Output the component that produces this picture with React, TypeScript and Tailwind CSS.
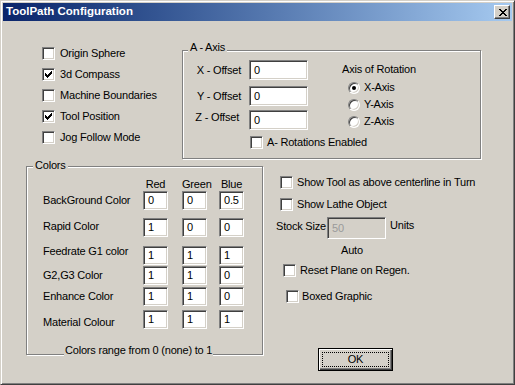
import React from 'react'

const sunken =
  'border border-t-[#808080] border-l-[#808080] border-b-white border-r-white shadow-[inset_1px_1px_0_#404040,inset_-1px_-1px_0_#d4d0c8]'

function Check({ checked = false }: { checked?: boolean }) {
  return (
    <span className={`flex h-[13px] w-[13px] shrink-0 items-center justify-center bg-white ${sunken}`}>
      {checked && (
        <svg width="7" height="7" viewBox="0 0 7 7" shapeRendering="crispEdges">
          <path
            d="M0 2h1v3H0zM1 3h1v3H1zM2 4h1v3H2zM3 3h1v3H3zM4 2h1v3H4zM5 1h1v3H5zM6 0h1v3H6z"
            fill="#000"
          />
        </svg>
      )}
    </span>
  )
}

function Radio({ checked = false }: { checked?: boolean }) {
  return (
    <span className={`flex h-[12px] w-[12px] shrink-0 items-center justify-center rounded-full bg-white ${sunken}`}>
      {checked && <span className="h-[4px] w-[4px] rounded-full bg-black" />}
    </span>
  )
}

function Field({ value, className = '' }: { value: string; className?: string }) {
  return <div className={`flex shrink-0 items-center bg-white pl-[4px] ${sunken} ${className}`}>{value}</div>
}

function CheckRow({ label, checked, className = '', gap = 'gap-[4px]' }: { label: string; checked?: boolean; className?: string; gap?: string }) {
  return (
    <div className={`flex h-[13px] items-center whitespace-nowrap ${gap} ${className}`}>
      <Check checked={checked} />
      <span>{label}</span>
    </div>
  )
}

const colorRows = [
  { name: 'BackGround Color', rgb: ['0', '0', '0.5'], row: 'mt-0', label: '' },
  { name: 'Rapid Color', rgb: ['1', '0', '0'], row: 'mt-[8px]', label: 'top-[-1px]' },
  { name: 'Feedrate G1 color', rgb: ['1', '1', '1'], row: 'mt-[9px]', label: 'top-[-4px]' },
  { name: 'G2,G3 Color', rgb: ['1', '1', '0'], row: 'mt-[1px]', label: '' },
  { name: 'Enhance Color', rgb: ['1', '1', '0'], row: 'mt-[2px]', label: '' },
  { name: 'Material Colour', rgb: ['1', '1', '1'], row: 'mt-[4px]', label: 'top-[3px]' },
]

const etched = 'border border-[#808080] shadow-[inset_1px_1px_0_#fff,1px_1px_0_#fff]'

export default function App() {
  return (
    <div className="h-[385px] w-[515px] bg-[#d4d0c8] font-['Liberation_Sans',Arial,sans-serif] text-[11px] tracking-[-0.2px] text-black">
      <div className="flex h-full flex-col border border-t-[#d4d0c8] border-l-[#d4d0c8] border-r-[#404040] border-b-[#404040] p-[2px] shadow-[inset_1px_1px_0_#fff,inset_-1px_-1px_0_#808080]">
        {/* Title bar */}
        <div className="flex h-[18px] shrink-0 items-center justify-between bg-linear-to-r from-[#0a246a] to-[#a6caf0] pl-[3px] pr-[2px]">
          <span className="text-[11.5px] font-bold tracking-normal text-white">ToolPath Configuration</span>
          <div className="flex h-[14px] w-[16px] items-center justify-center border border-t-white border-l-white border-r-[#404040] border-b-[#404040] bg-[#d4d0c8] pl-[1px] shadow-[inset_-1px_-1px_0_#808080]">
            <svg width="8" height="7" viewBox="0 0 8 7" shapeRendering="crispEdges">
              <path
                d="M0 0h2v1H0zM6 0h2v1H6zM1 1h2v1H1zM5 1h2v1H5zM2 2h4v1H2zM3 3h2v1H3zM2 4h4v1H2zM1 5h2v1H1zM5 5h2v1H5zM0 6h2v1H0zM6 6h2v1H6z"
                fill="#000"
              />
            </svg>
          </div>
        </div>

        {/* Body */}
        <div className="flex flex-1 flex-col">
          {/* Top row */}
          <div className="flex items-start">
            <div className="ml-[39px] flex w-[140px] flex-col pt-[22px]">
              {[
                ['Origin Sphere', false],
                ['3d Compass', true],
                ['Machine Boundaries', false],
                ['Tool Position', true],
                ['Jog Follow Mode', false],
              ].map(([label, checked]) => (
                <div key={label as string} className="flex h-[21px] items-center gap-[5px] whitespace-nowrap">
                  <Check checked={checked as boolean} />
                  <span>{label}</span>
                </div>
              ))}
            </div>

            {/* A - Axis */}
            <div className={`relative mt-[29px] h-[109px] w-[299px] ${etched}`}>
              <span className="absolute left-[5px] top-[-10px] bg-[#d4d0c8] px-[2px] leading-[13px]">A - Axis</span>
              <div className="flex flex-col pl-[7px] pt-[9px]">
                <div className="flex items-start">
                  <div className="flex flex-col">
                    <div className="flex items-center">
                      <span className="w-[51px] text-right">X - Offset</span>
                      <Field value="0" className="ml-[8px] h-[20px] w-[59px]" />
                    </div>
                    <div className="mt-[6px] flex items-center">
                      <span className="w-[51px] text-right">Y - Offset</span>
                      <Field value="0" className="ml-[8px] h-[20px] w-[59px]" />
                    </div>
                    <div className="mt-[4px] flex items-center">
                      <span className="relative top-[-3px] w-[49px] text-right">Z - Offset</span>
                      <Field value="0" className="ml-[10px] h-[20px] w-[59px]" />
                    </div>
                  </div>
                  <div className="ml-[34px] flex flex-col">
                    <span className="mt-[3px] leading-[13px]">Axis of Rotation</span>
                    <div className="mt-[3px] flex flex-col">
                      {[
                        ['X-Axis', true],
                        ['Y-Axis', false],
                        ['Z-Axis', false],
                      ].map(([label, checked]) => (
                        <div key={label as string} className="ml-[6px] flex h-[17px] items-center gap-[4px]">
                          <Radio checked={checked as boolean} />
                          <span>{label}</span>
                        </div>
                      ))}
                    </div>
                  </div>
                </div>
                <CheckRow label="A- Rotations Enabled" className="ml-[60px] mt-[6px]" />
              </div>
            </div>
          </div>

          {/* Bottom row */}
          <div className="flex items-start">
            {/* Colors */}
            <div className={`relative ml-[23px] mt-[7px] h-[189px] w-[237px] ${etched}`}>
              <span className="absolute left-[6px] top-[-8px] bg-[#d4d0c8] px-[2px] leading-[13px]">Colors</span>
              <div className="flex flex-col pl-[16px] pt-[11px]">
                <div className="flex h-[13px] items-center leading-[13px]">
                  <span className="w-[100px]" />
                  <span className="w-[25px] text-center">Red</span>
                  <span className="ml-[14px] w-[25px] text-center">Green</span>
                  <span className="ml-[12px] w-[25px] text-center">Blue</span>
                </div>
                {colorRows.map((r) => (
                  <div key={r.name} className={`flex items-center ${r.row}`}>
                    <span className={`relative w-[100px] whitespace-nowrap ${r.label}`}>{r.name}</span>
                    <Field value={r.rgb[0]} className="h-[19px] w-[25px]" />
                    <Field value={r.rgb[1]} className="ml-[14px] h-[19px] w-[25px]" />
                    <Field value={r.rgb[2]} className="ml-[12px] h-[19px] w-[25px]" />
                  </div>
                ))}
              </div>
              <span className="absolute bottom-[-3px] left-[37px] bg-[#d4d0c8] px-[1px] leading-[13px] whitespace-nowrap">
                Colors range from 0 (none) to 1
              </span>
            </div>

            {/* Right column */}
            <div className="flex flex-col items-start">
              <CheckRow label="Show Tool as above centerline in Turn" className="ml-[17px] mt-[17px]" />
              <CheckRow label="Show Lathe Object" className="ml-[17px] mt-[9px]" />
              <div className="ml-[13px] mt-[6px] flex items-start">
                <span className="mt-[3px] w-[51px] whitespace-nowrap leading-[13px]">Stock Size</span>
                <div className={`flex h-[22px] w-[59px] items-center bg-[#d4d0c8] pl-[4px] text-[#9a9a9a] ${sunken}`}>50</div>
                <span className="ml-[4px] mt-[2px] leading-[13px]">Units</span>
              </div>
              <span className="ml-[78px] mt-[5px] leading-[13px]">Auto</span>
              <CheckRow label="Reset Plane on Regen." className="ml-[20px] mt-[7px]" />
              <CheckRow label="Boxed Graphic" gap="gap-[3px]" className="ml-[23px] mt-[13px]" />
              <button className="ml-[55px] mt-[45px] flex h-[23px] w-[75px] border border-black bg-[#d4d0c8] p-[3px] shadow-[inset_1px_1px_0_#fff,inset_-1px_-1px_0_#404040,inset_-2px_-2px_0_#808080]">
                <span className="flex flex-1 items-center justify-center border border-dotted border-black">OK</span>
              </button>
            </div>
          </div>
        </div>
      </div>
    </div>
  )
}
